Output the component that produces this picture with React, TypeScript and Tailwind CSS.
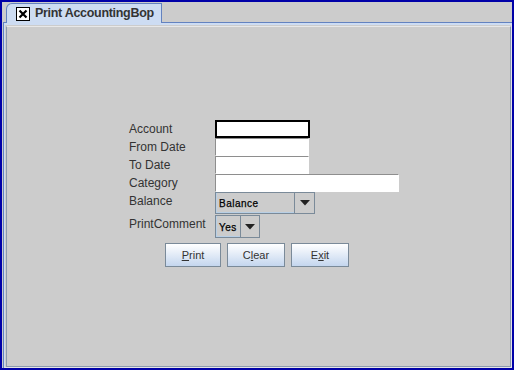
import type { ReactNode } from "react";

const font = { fontFamily: '"Liberation Sans", Arial, sans-serif' };

function Field({ width, focused }: { width: string; focused?: boolean }) {
  return focused ? (
    <div className={`${width} h-[18px] border-2 border-black bg-white`} />
  ) : (
    <div
      className={`${width} h-[18px] border border-t-[#8e8e8e] border-l-[#8e8e8e] border-r-white border-b-white bg-white`}
    />
  );
}

function Combo({ value, width, arrowWidth, height }: { value: string; width: string; arrowWidth: string; height: string }) {
  return (
    <div className={`${width} ${height} flex border border-[#7a8a99] bg-[#cccccc]`}>
      <div className="flex flex-1 items-center border-b border-l border-[#b8cfe5] pl-[2px] pt-[2px] text-[10px] tracking-[0.5px] text-black [-webkit-text-stroke:0.25px_black]">
        {value}
      </div>
      <div className={`${arrowWidth} flex items-center justify-center border-l border-[#7a8a99]`}>
        <svg width="10" height="6" viewBox="0 0 10 6">
          <path d="M0 0h10L5 5.5z" fill="#222" />
        </svg>
      </div>
    </div>
  );
}

function Button({ width, children }: { width: string; children: ReactNode }) {
  return (
    <button
      className={`${width} h-[24px] border border-[#7a8a99] bg-gradient-to-b from-white to-[#c4d6ee] text-[11px] text-[#333]`}
    >
      {children}
    </button>
  );
}

export default function App() {
  const rows: [string, ReactNode][] = [
    ["Account", <Field width="w-[95px]" focused />],
    ["From Date", <Field width="w-[94px]" />],
    ["To Date", <Field width="w-[94px]" />],
    ["Category", <Field width="w-[184px]" />],
  ];

  return (
    <div className="flex h-[370px] w-[514px] bg-[#0000a8] p-[2px]" style={font}>
      <div className="flex flex-1 flex-col bg-[#cccccc] pl-[1px]">
        {/* tab strip */}
        <div className="flex pl-[3px] pt-[1px]">
          <div className="relative z-10 -mb-px flex h-[20px] w-[156px] items-center gap-[5px] rounded-tl-[6px] border-l border-r border-t border-[#6382bf] bg-[#cddcf2] pl-[9px]">
            <svg width="14" height="14" viewBox="0 0 14 14">
              <rect x="0.5" y="0.5" width="13" height="13" fill="white" stroke="#000" />
              <path d="M3.5 3.5l7 7M10.5 3.5l-7 7" stroke="#000" strokeWidth="2.2" />
            </svg>
            <span className="text-[12.5px] font-bold tracking-[-0.3px] text-[#333]">Print AccountingBop</span>
          </div>
        </div>

        {/* pane */}
        <div className="flex flex-1 border-l border-t border-[#6382bf]">
          <div className="flex flex-1 border-l border-t-2 border-r border-b border-[#cddcf2] border-r-[#e4e4e4] border-b-[#e4e4e4]">
            <div className="flex flex-1 border-l border-t border-[#cccccc]">
              <div className="flex-1 border border-[#8a99b0] border-t-[#e8e8e8] pl-[122px] pt-[93px]">
                <div className="grid grid-cols-[86px_auto] items-center text-[12px] text-[#333]">
                  {rows.map(([label, field]) => (
                    <div key={label} className="contents">
                      <div className="h-[18px] pt-px leading-[16px]">{label}</div>
                      <div>{field}</div>
                    </div>
                  ))}
                  <div className="h-[22px] leading-[18px]">Balance</div>
                  <Combo value="Balance" width="w-[100px]" arrowWidth="w-[20px]" height="h-[22px]" />
                  <div className="h-[24px] pt-px leading-[18px]">PrintComment</div>
                  <div className="pt-px">
                    <Combo value="Yes" width="w-[45px]" arrowWidth="w-[19px]" height="h-[23px]" />
                  </div>
                </div>
                <div className="ml-[36px] mt-[5px] flex gap-[6px]">
                  <Button width="w-[56px]">
                    <span className="underline">P</span>rint
                  </Button>
                  <Button width="w-[58px]">
                    C<span className="underline">l</span>ear
                  </Button>
                  <Button width="w-[58px]">
                    E<span className="underline">x</span>it
                  </Button>
                </div>
              </div>
            </div>
          </div>
        </div>
      </div>
    </div>
  );
}
